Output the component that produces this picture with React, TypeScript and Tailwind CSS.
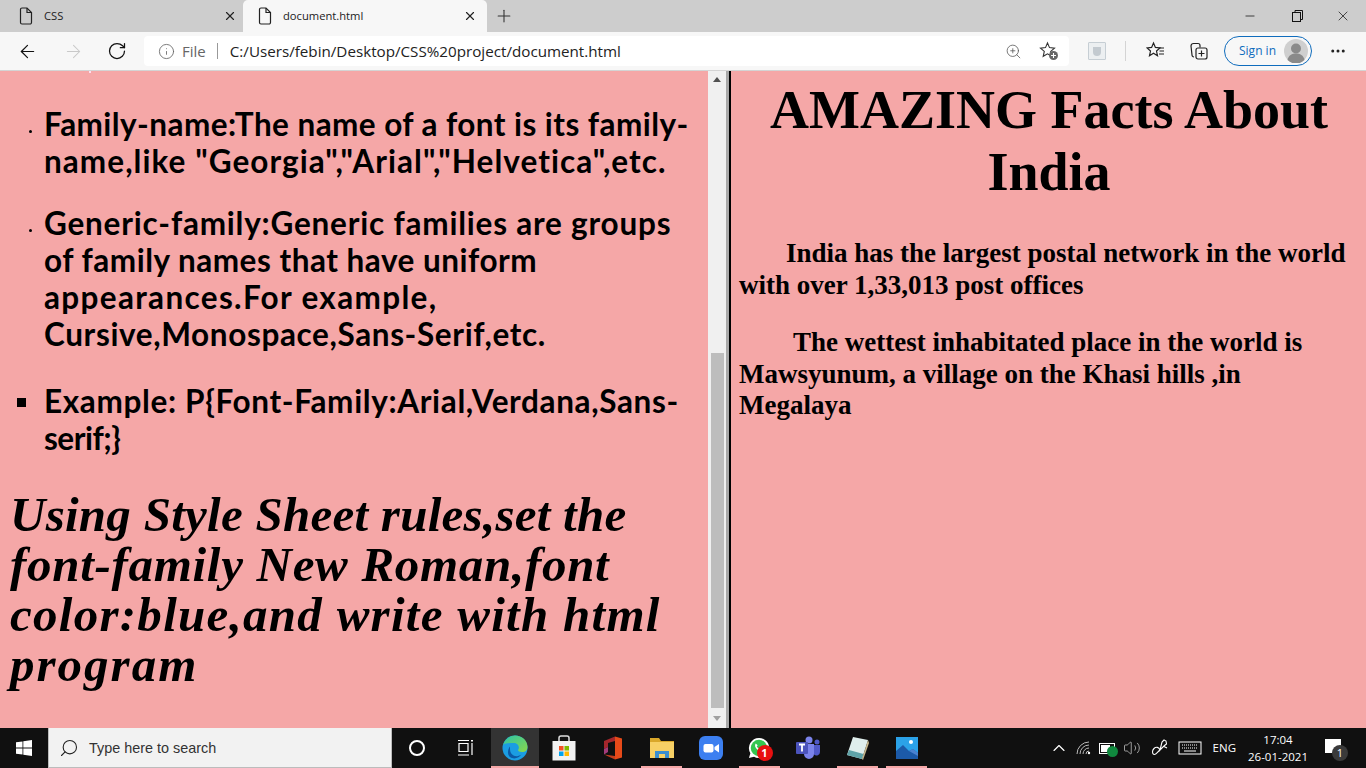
import { ArrowLeft, ArrowRight, RotateCw, Info, ZoomIn, Plus, X, Minus, MoreHorizontal, ChevronUp, Search, Volume2 } from 'lucide-react'

function PageIcon() {
    return (
        <svg width="14" height="18" viewBox="0 0 14 18" fill="none" stroke="#222" strokeWidth="1.2">
            <path d="M1.500 2.500a1.500 1.500 0 0 1 1.500-1.500h5l4.500 4.500v10a1.500 1.500 0 0 1-1.500 1.500h-8a1.500 1.500 0 0 1-1.500-1.500z" />
            <path d="M8 1v4.500h4.500" />
        </svg>
    )
}

function Tab({ title, active }: { title: string; active?: boolean }) {
    return (
        <div className={`h-[32px] flex items-center rounded-t-[5px] ${active ? 'w-[244px] pl-[15px] pr-[10px] bg-[#f7f7f7]' : 'w-[243px] pl-[19px] pr-[6px]'}`}>
            <PageIcon />
            <span className="ml-[11px] text-[11.2px] text-[#222] flex-1 font-['Open_Sans',sans-serif]">{title}</span>
            <X size={14} strokeWidth={2} className="text-[#222]" />
        </div>
    )
}

function StarPlus() {
    return (
        <svg width="20" height="20" viewBox="0 0 20 20" fill="none" stroke="#333" strokeWidth="1.1">
            <path d="M8.500 2l2 4.600 5 .5-3.800 3.300 1.100 4.900-4.300-2.500-4.300 2.500 1.100-4.900L1.500 7.100l5-.5z" />
            <circle cx="14.500" cy="14.500" r="4.500" fill="#666" stroke="none" />
            <path d="M14.500 12v5M12 14.500h5" stroke="#fff" />
        </svg>
    )
}

function Toolbar() {
    return (
        <div className="h-[39px] bg-[#f7f7f7] border-b border-[#d4d4d4] flex items-center">
            <div className="w-[144px] flex items-center pl-[17px] gap-[25px]">
                <ArrowLeft size={21} strokeWidth={1.4} className="text-[#111]" />
                <ArrowRight size={21} strokeWidth={1.2} className="text-[#c9c9c9]" />
                <RotateCw size={20} strokeWidth={1.5} className="text-[#111] -ml-[2px]" />
            </div>
            <div className="w-[925px] h-[30px] bg-white rounded-[4px] flex items-center pl-[14px] pr-[10px]">
                <Info size={17} strokeWidth={1.2} className="text-[#666]" />
                <span className="ml-[7px] text-[15px] text-[#666] font-['Open_Sans',sans-serif]">File</span>
                <span className="ml-[11px] w-px h-[16px] bg-[#999]" />
                <span className="ml-[12px] flex-1 text-[15.2px] text-[#222] font-['Open_Sans',sans-serif]">C:/Users/febin/Desktop/CSS%20project/document.html</span>
                <ZoomIn size={17} strokeWidth={1.1} className="text-[#555] mr-[17px]" />
                <StarPlus />
            </div>
            <div className="ml-[19px] w-[18px] h-[18px] border border-[#c6ced4] bg-[#eceff1] rounded-[1px] flex items-center justify-center">
                <span className="w-[8px] h-[9px] bg-[#c3cad0] rounded-b-[4px]" />
            </div>
            <span className="ml-[19px] w-px h-[20px] bg-[#d4d4d4]" />
            <svg className="ml-[20px]" width="20" height="20" viewBox="0 0 20 20" fill="none" stroke="#222" strokeWidth="1.200">
                <path d="M7.500 2l1.900 4.400 4.600.5-3.500 3.100 1 4.700-4-2.400-4 2.400 1-4.700L1 6.900l4.600-.5z" />
                <path d="M13 7h5M13.500 10h4.500M13 13h5" />
            </svg>
            <svg className="ml-[23px]" width="20" height="20" viewBox="0 0 20 20" fill="none" stroke="#222" strokeWidth="1.200">
                <path d="M5 16a2 2 0 0 1-2-2L2 5a2.500 2.500 0 0 1 2.500-2.500H9a2 2 0 0 1 2 2v2" />
                <rect x="7" y="7" width="11" height="11" rx="2" fill="#f7f7f7" />
                <path d="M12.500 9.500v6M9.500 12.500h6" />
            </svg>
            <div className="ml-[15px] w-[88px] h-[30px] border border-[#0f6cbd] rounded-full flex items-center pl-[14px] pr-[3px]">
                <span className="flex-1 text-[12px] text-[#0f6cbd] font-['Open_Sans',sans-serif]">Sign in</span>
                <svg width="24" height="24" viewBox="0 0 24 24">
                    <circle cx="12" cy="12" r="12" fill="#cfcfcf" />
                    <circle cx="12" cy="9.500" r="5" fill="#8a8a8a" />
                    <path d="M3.500 21c1-5 4.500-6.500 8.500-6.500s7.500 1.500 8.500 6.500a12 12 0 0 1-17 0z" fill="#8a8a8a" />
                </svg>
            </div>
            <MoreHorizontal size={18} strokeWidth={2} className="ml-[17px] text-[#222]" />
        </div>
    )
}

function Line({ children, className }: { children: string; className: string }) {
    return <span className={`block whitespace-nowrap ${className}`}>{children}</span>
}

function Item({ bullet, children }: { bullet: 'dot' | 'square'; children: React.ReactNode }) {
    return (
        <li className="flex">
            <div className="w-[44px] shrink-0 flex justify-end">
                {bullet === 'dot' ? (
                    <span className="mt-[24px] mr-[12px] w-[3px] h-[3px] rounded-full bg-black" />
                ) : (
                    <span className="mt-[15px] mr-[18px] w-[9px] h-[9px] bg-black" />
                )}
            </div>
            <div className="text-[31.5px] leading-[37px] font-bold text-black font-['Lato',sans-serif]">{children}</div>
        </li>
    )
}

function LeftPane() {
    return (
        <div className="relative w-[708px] shrink-0 bg-[#f5a7a7] overflow-hidden pt-[35px]">
            <span className="absolute left-[89px] top-0 w-[2px] h-[2px] bg-[#fde]" />
            <ul className="flex flex-col">
                <Item bullet="dot">
                    <Line className="tracking-[0.43px]">Family-name:The name of a font is its family-</Line>
                    <Line className="tracking-[1.05px]">name,like "Georgia","Arial","Helvetica",etc.</Line>
                </Item>
                <div className="h-[25px]" />
                <Item bullet="dot">
                    <Line className="tracking-[0.78px]">Generic-family:Generic families are groups</Line>
                    <Line className="tracking-[0.5px]">of family names that have uniform</Line>
                    <Line className="tracking-[1.33px]">appearances.For example,</Line>
                    <Line className="tracking-[0.62px]">Cursive,Monospace,Sans-Serif,etc.</Line>
                </Item>
                <div className="h-[30px]" />
                <Item bullet="square">
                    <Line className="tracking-[0.64px]">Example: P{'{'}Font-Family:Arial,Verdana,Sans-</Line>
                    <Line className="tracking-[-0.5px]">serif;{'}'}</Line>
                </Item>
            </ul>
            <div className="mt-[33px] pl-[10px] text-[49px] leading-[50px] font-bold italic text-black font-['Liberation_Serif',serif]">
                <Line className="tracking-[0.26px]">Using Style Sheet rules,set the</Line>
                <Line className="tracking-[0.7px]">font-family New Roman,font</Line>
                <Line className="tracking-[1.27px]">color:blue,and write with html</Line>
                <Line className="tracking-[2px]">program</Line>
            </div>
        </div>
    )
}

function Scrollbar() {
    return (
        <div className="w-[18px] shrink-0 bg-[#f0f0f0] flex flex-col items-center">
            <div className="h-[17px] flex items-center justify-center">
                <div className="w-0 h-0 border-x-[4px] border-x-transparent border-b-[5px] border-b-[#505050]" />
            </div>
            <div className="h-[265px]" />
            <div className="w-[13px] flex-1 bg-[#bdbdbd]" />
            <div className="h-[20px] flex items-center justify-center">
                <div className="w-0 h-0 border-x-[4px] border-x-transparent border-t-[5px] border-t-[#a0a0a0]" />
            </div>
        </div>
    )
}

function RightPane() {
    return (
        <div className="flex-1 bg-[#f5a7a7] pl-[8px] pr-[7px] text-black font-['Liberation_Serif',serif] font-bold">
            <h1 className="text-[54px] leading-[62px] text-center mt-[8px]">AMAZING Facts About India</h1>
            <p className="mt-[35px] text-[27px] leading-[31.5px] indent-[47px]">India has the largest postal network in the world with over 1,33,013 post offices</p>
            <p className="mt-[26px] text-[27px] leading-[31.5px] indent-[54px]">The wettest inhabitated place in the world is Mawsyunum, a village on the Khasi hills ,in Megalaya</p>
        </div>
    )
}

function EdgeIcon() {
    return (
        <svg width="26" height="26" viewBox="0 0 26 26">
            <defs>
                <linearGradient id="eg1" x1="0" y1="0" x2="1" y2="1">
                    <stop offset="0" stopColor="#2bc4a8" />
                    <stop offset="1" stopColor="#8ad84a" />
                </linearGradient>
            </defs>
            <circle cx="13" cy="13" r="12.500" fill="#1b9de2" />
            <path d="M1 10C3 3 9 .5 13 .5c7 0 12.500 5 12.500 11.500 0 3-2 5-5.500 5-2.500 0-4-1-4-2 2-2 .5-7-4-7C7 8 3 8 1 10z" fill="url(#eg1)" />
            <path d="M8 14c0 5 4 8 8 7 2-.5 3-1 4-2-3 4-8 6-12 3-2.500-2-2.500-6-1-9 .5-1 1-1.500 1-1z" fill="#0c59a4" />
        </svg>
    )
}

function StoreIcon() {
    return (
        <svg width="24" height="26" viewBox="0 0 24 26">
            <path d="M7 6V3a2 2 0 0 1 2-2h6a2 2 0 0 1 2 2v3" fill="none" stroke="#ddd" strokeWidth="1.500" />
            <rect x="0.500" y="6" width="23" height="19.500" fill="#f2f2f2" />
            <rect x="7" y="11" width="4.500" height="4.500" fill="#f25022" />
            <rect x="12.500" y="11" width="4.500" height="4.500" fill="#7fba00" />
            <rect x="7" y="16.500" width="4.500" height="4.500" fill="#00a4ef" />
            <rect x="12.500" y="16.500" width="4.500" height="4.500" fill="#ffb900" />
        </svg>
    )
}

function OfficeIcon() {
    return (
        <svg width="20" height="24" viewBox="0 0 20 24">
            <path d="M12 .5l7 2v19l-7 2z" fill="#e64a19" />
            <path d="M1 5l11-4.500V5L5 7v4L1 13z" fill="#a4262c" />
            <path d="M1 13l4-2v5l-4 2.500z" fill="#a33b7a" />
            <path d="M1 18.500L12 20v3.500z" fill="#c43e1c" />
        </svg>
    )
}

function FolderIcon() {
    return (
        <svg width="24" height="22" viewBox="0 0 24 22">
            <path d="M0 1h9l2 3h13v3H0z" fill="#d9a72a" />
            <rect x="0" y="5" width="24" height="16" fill="#f7d065" />
            <rect x="5" y="14" width="14" height="7" fill="#3a8ed0" />
            <rect x="9" y="17" width="6" height="4" fill="#f7d065" />
        </svg>
    )
}

function ZoomAppIcon() {
    return (
        <svg width="24" height="24" viewBox="0 0 24 24">
            <rect width="24" height="24" rx="6" fill="#3c7ff0" />
            <rect x="4.500" y="8" width="10" height="8.500" rx="2" fill="#fff" />
            <path d="M15.500 11l4.500-3v8.500l-4.500-3z" fill="#fff" />
        </svg>
    )
}

function WhatsAppIcon() {
    return (
        <div className="relative w-[24px] h-[24px]">
            <svg width="22" height="24" viewBox="0 0 24 24">
                <path d="M12 1a11 11 0 0 0-9.400 16.600L1 23l5.600-1.500A11 11 0 1 0 12 1z" fill="#fff" />
                <circle cx="12" cy="12" r="9" fill="#33c650" />
                <path d="M8.500 7c-1.500 1.500-1 4 1.500 6.500s5 3 6.500 1.500l-2-2-1.500 1-3.500-3.500 1-1.500z" fill="#fff" />
            </svg>
            <span className="absolute left-[9px] top-[9px] w-[16px] h-[16px] rounded-full bg-[#e81010] text-white text-[11px] font-bold leading-[16px] text-center font-['Open_Sans',sans-serif]">1</span>
        </div>
    )
}

function TeamsIcon() {
    return (
        <svg width="25" height="24" viewBox="0 0 25 24">
            <circle cx="13" cy="4" r="3.500" fill="#7b83eb" />
            <circle cx="21" cy="6" r="2.500" fill="#5059c9" />
            <path d="M17 9h7v7a3.500 3.500 0 0 1-6 2.500z" fill="#5059c9" />
            <path d="M7 8h11v10a5 5 0 0 1-10 0z" fill="#7b83eb" />
            <rect x="0" y="6" width="12" height="12" rx="1" fill="#4b53bc" />
            <path d="M3 8.500h6M6 8.500v7" stroke="#fff" strokeWidth="1.800" />
        </svg>
    )
}

function NotepadIcon() {
    return (
        <svg width="24" height="24" viewBox="0 0 24 24">
            <path d="M7 1l15 3-6 19-15-4z" fill="#dfeeec" />
            <path d="M1 19l15 4 1.500-5L3 14z" fill="#5fa3a8" />
            <path d="M22 4l1 3-6 17-1-1z" fill="#c9b98e" />
        </svg>
    )
}

function PhotosIcon() {
    return (
        <svg width="22" height="22" viewBox="0 0 22 22">
            <rect width="22" height="22" fill="#2ba2e8" />
            <circle cx="15" cy="5" r="2" fill="#fff" />
            <path d="M0 22V14l7-6 6 6 4-2 5 4v6z" fill="#1c5aa8" />
            <path d="M13 14l4-2 5 4v3z" fill="#4a82d0" />
        </svg>
    )
}

function Running({ children, active }: { children: React.ReactNode; active?: boolean }) {
    return (
        <div className={`relative h-[40px] flex items-center justify-center ${active ? 'bg-[#333]' : ''}`}>
            {children}
            {active ? <span className="absolute left-0 right-0 bottom-0 h-[2px] bg-[#f5a7a7]" /> : <span className="absolute left-[4px] right-[4px] bottom-0 h-[2px] bg-[#f5a7a7]" />}
        </div>
    )
}

function Plain({ children }: { children: React.ReactNode }) {
    return <div className="h-[40px] flex items-center justify-center">{children}</div>
}

function Taskbar() {
    return (
        <div className="h-[40px] bg-[#101010] flex items-center text-white font-['Open_Sans',sans-serif]">
            <div className="w-[48px] flex justify-center">
                <svg width="16" height="16" viewBox="0 0 16 16" fill="#fff">
                    <path d="M0 2.300l6.500-.9v6.200H0zM7.300 1.300L16 0v7.600H7.300zM0 8.400h6.500v6.200L0 13.700zM7.300 8.400H16V16l-8.700-1.200z" />
                </svg>
            </div>
            <div className="w-[344px] h-[40px] bg-[#f2f2f2] border-b border-x border-[#bcbcbc] flex items-center pl-[10px]">
                <Search size={20} strokeWidth={1.3} className="text-[#222] -scale-x-100" />
                <span className="ml-[10px] pt-[2px] text-[14.400px] text-[#333] font-['Liberation_Sans',sans-serif]">Type here to search</span>
            </div>
            <div className="w-[49px] flex justify-center">
                <span className="w-[16px] h-[16px] rounded-full border-[2.500px] border-white" />
            </div>
            <div className="w-[50px] flex justify-center">
                <svg width="18" height="16" viewBox="0 0 18 16" fill="none" stroke="#fff" strokeWidth="1.200">
                    <path d="M1 0.500h11M2 3.500h9v8H2zM1 15h11M15 3v12" />
                    <path d="M15 0v1.500" strokeWidth="2" />
                </svg>
            </div>
            <div className="grid grid-cols-[48px_49px_49px_49px_49px_49px_49px_49px_49px] items-center">
                <Running active><EdgeIcon /></Running>
                <Plain><StoreIcon /></Plain>
                <Plain><OfficeIcon /></Plain>
                <Running><FolderIcon /></Running>
                <Plain><ZoomAppIcon /></Plain>
                <Running><WhatsAppIcon /></Running>
                <Plain><TeamsIcon /></Plain>
                <Running><NotepadIcon /></Running>
                <Running><PhotosIcon /></Running>
            </div>
            <div className="flex-1" />
            <div className="flex items-center">
                <ChevronUp size={20} strokeWidth={1.4} className="mr-[7px]" />
                <svg width="16" height="14" viewBox="0 0 16 14" fill="none" stroke="#bbb" strokeWidth="1">
                    <path d="M1 13a12 12 0 0 1 12-12M4 13a9 9 0 0 1 9-9M7 13a6 6 0 0 1 6-6M10 13a3 3 0 0 1 3-3" />
                    <circle cx="13" cy="12" r="1.200" fill="#fff" stroke="none" />
                </svg>
                <div className="relative ml-[7px] w-[16px] h-[11px] border border-white bg-[#101010]">
                    <span className="absolute left-[1px] top-[1px] bottom-[1px] w-[9px] bg-white" />
                    <span className="absolute left-[7px] top-[2px] w-[11px] h-[11px] rounded-full bg-[#10893e]" />
                </div>
                <Volume2 size={18} strokeWidth={1} className="ml-[8px] text-[#ccc]" />
                <svg className="ml-[10px]" width="18" height="18" viewBox="0 0 18 18" fill="none" stroke="#fff" strokeWidth="1.100">
                    <path d="M9 11l2-8 2-2 2 1 .5 3-2 1.500-4.500 4.500z" />
                    <path d="M13 7.500l3 1.500M9 11c-1-3-4-3.500-6-1.500S1 15 3 15.500s3-2 6-4.500" />
                </svg>
                <svg className="ml-[9px]" width="24" height="14" viewBox="0 0 24 14" fill="none" stroke="#fff" strokeWidth="1">
                    <rect x="1" y="1" width="22" height="12" />
                    <path d="M4 4h16M4 7h16" strokeDasharray="1 1" />
                    <path d="M6 10h12" />
                </svg>
                <span className="ml-[11px] text-[11.500px]">ENG</span>
                <div className="ml-[11px] w-[62px] text-center text-[11.500px] leading-[17px]">
                    <div>17:04</div>
                    <div>26-01-2021</div>
                </div>
                <div className="relative ml-[16px] mr-[25px] w-[16px] h-[14px] bg-white -mt-[4px]">
                    <span className="absolute left-[7px] top-[6px] w-[16px] h-[16px] rounded-full bg-[#3a3a3a] text-[11px] leading-[16px] text-center">1</span>
                </div>
            </div>
        </div>
    )
}

export default function App() {
    return (
        <div className="w-[1366px] h-[768px] flex flex-col overflow-hidden">
            <div className="h-[32px] bg-[#cdcdcd] flex items-center">
                <Tab title="CSS" />
                <Tab title="document.html" active />
                <Plus size={20} strokeWidth={1.3} className="ml-[7px] text-[#333]" />
                <div className="flex-1" />
                <Minus size={14} strokeWidth={1.3} className="text-[#111] mr-[35px]" />
                <svg className="mr-[32px]" width="11" height="12" viewBox="0 0 11 12" fill="none" stroke="#111" strokeWidth="1">
                    <rect x="0.500" y="2.500" width="8" height="9" />
                    <path d="M3 2.500V.5h7.500v9H8.500" />
                </svg>
                <X size={16} strokeWidth={1.1} className="text-[#111] mr-[15px]" />
            </div>
            <Toolbar />
            <div className="h-[657px] flex">
                <LeftPane />
                <Scrollbar />
                <div className="w-[3px] bg-[#a8a8a8]" />
                <div className="w-[2px] bg-black" />
                <RightPane />
            </div>
            <Taskbar />
        </div>
    )
}
